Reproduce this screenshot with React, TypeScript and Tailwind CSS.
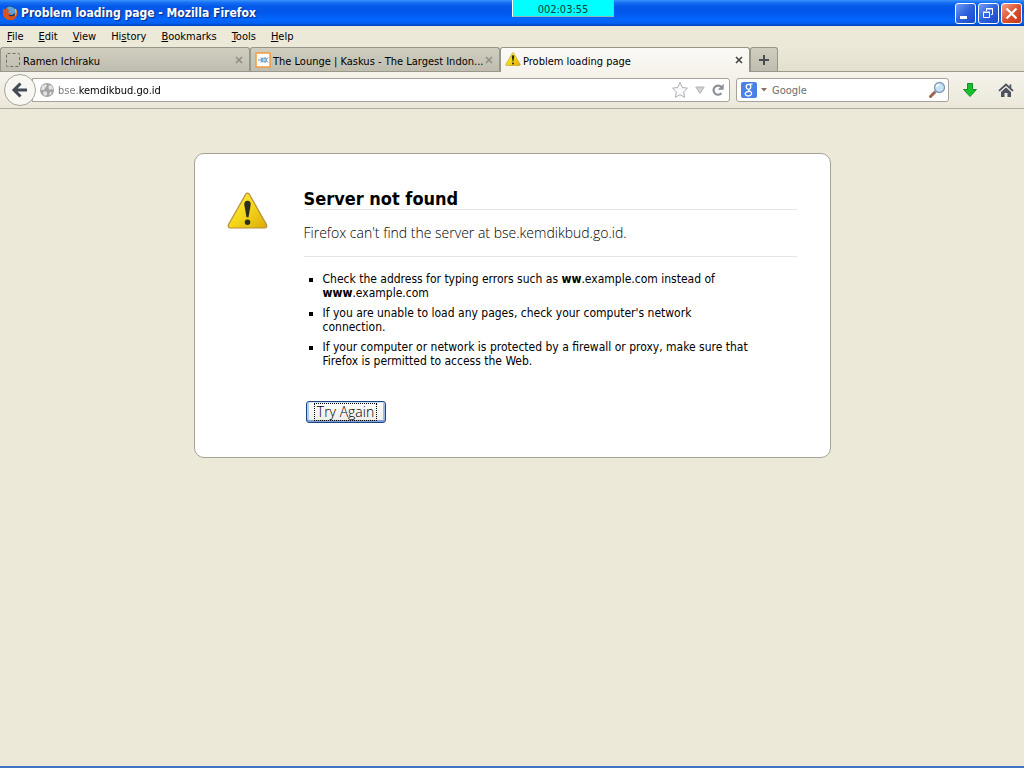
import { useState, type FormEvent } from "react";

const MENU_ITEMS = [
  { before: "", key: "F", after: "ile" },
  { before: "", key: "E", after: "dit" },
  { before: "", key: "V", after: "iew" },
  { before: "Hi", key: "s", after: "tory" },
  { before: "", key: "B", after: "ookmarks" },
  { before: "", key: "T", after: "ools" },
  { before: "", key: "H", after: "elp" },
];

const TABS = [
  { id: "ramen", title: "Ramen Ichiraku", icon: "blank" },
  { id: "kaskus", title: "The Lounge | Kaskus - The Largest Indon...", icon: "kaskus" },
  { id: "error", title: "Problem loading page", icon: "warning" },
] as const;

type TabIcon = (typeof TABS)[number]["icon"];

function FirefoxLogo() {
  return (
    <svg viewBox="0 0 16 16" className="h-4 w-4 shrink-0">
      <circle cx="8" cy="7.500" r="6.500" fill="#16346c" />
      <path d="M4 3C6 .6 11.500.8 13.300 4.600 13.800 8 12 10 9 10 6.500 10 5 8 5 6z" fill="#5aa5d8" />
      <path
        d="M1.600 3.200C.2 6 .4 10.500 3 13c3 3 8 2.800 10.600-.1C16 10 16 6.300 13.900 3.800c.5 2.200.3 4.400-1 5.900-1.800 2-5.100 2-6.600.2C8 10 9 9 9.500 8.300 7.500 8.500 6 8 5.800 6.500 6.500 6.300 7.600 6.200 8 5.400 7 5 5.600 4.600 5.400 3.200 4.300 3.300 3.400 3.700 2.800 4.400z"
        fill="#d9531c"
      />
      <path d="M13.900 3.800c1.400 3 .8 6-1 7.400.6-2.400.5-5-.2-7z" fill="#f8c33c" />
    </svg>
  );
}

function WarningIcon({ className, id }: { className: string; id: string }) {
  return (
    <svg viewBox="0 0 42 38" className={className}>
      <defs>
        <linearGradient id={id} x1="0" y1="0" x2="1" y2="1">
          <stop offset="0" stopColor="#fff04a" />
          <stop offset="0.500" stopColor="#f4d818" />
          <stop offset="1" stopColor="#dba90a" />
        </linearGradient>
      </defs>
      <path
        d="M19.200 2.200Q21 .2 22.800 2.200L40.600 33.500Q41.500 36.800 38.500 37H3.500Q.5 36.800 1.400 33.500z"
        fill={`url(#${id})`}
        stroke="#b58e3c"
        strokeWidth="1.200"
      />
      <path d="M21 9c2.600 0 3.600 1.800 3.200 4.500L22 26h-2L17.800 13.500C17.400 10.800 18.400 9 21 9z" fill="#2c2c20" />
      <circle cx="21" cy="31" r="2.800" fill="#2c2c20" />
    </svg>
  );
}

function TabFavicon({ icon }: { icon: TabIcon }) {
  if (icon === "warning") return <WarningIcon id="tab-warning" className="h-4 w-4 shrink-0 pb-0.5" />;
  if (icon === "kaskus") {
    return (
      <svg viewBox="0 0 16 16" className="h-4 w-4 shrink-0">
        <rect x="1" y="1" width="14" height="14" fill="#fff" stroke="#f49a42" strokeWidth="1.500" />
        <path d="M3 8h3M6 5.500l2 5M8 5.500 6 10.500M9 6v4M9 6h2v4H9M11 8l2-2.500M11 8l2 2.500" stroke="#5b94c4" fill="none" />
      </svg>
    );
  }
  return (
    <svg viewBox="0 0 16 16" className="h-4 w-4 shrink-0">
      <rect x="1.500" y="1.500" width="13" height="13" rx="1" fill="none" stroke="#6f6e66" strokeDasharray="3 2" />
    </svg>
  );
}

function TitleBar() {
  return (
    <header className="flex h-[26px] items-center bg-[linear-gradient(#3b93fb_0%,#1670f5_10%,#0458e8_25%,#0258ec_50%,#0366fe_75%,#0361f5_88%,#0142b8_100%)] px-0.5">
      <FirefoxLogo />
      <h1 className="ml-[3px] flex-1 whitespace-nowrap text-[12px] font-bold text-white [text-shadow:1px_1px_1px_#0a2a7a]">
        Problem loading page - Mozilla Firefox
      </h1>
      <div className="flex gap-0.5">
        <button
          type="button"
          aria-label="Minimize"
          className="flex h-[21px] w-[21px] items-center justify-center rounded-[3px] border border-white bg-linear-to-br from-[#6f9cf5] via-[#2c62dc] to-[#1a49c8]"
        >
          <svg viewBox="0 0 19 19" className="h-[19px] w-[19px]">
            <path d="M4 12h7v3H4z" fill="#fff" />
          </svg>
        </button>
        <button
          type="button"
          aria-label="Restore"
          className="flex h-[21px] w-[21px] items-center justify-center rounded-[3px] border border-white bg-linear-to-br from-[#6f9cf5] via-[#2c62dc] to-[#1a49c8]"
        >
          <svg viewBox="0 0 19 19" className="h-[19px] w-[19px]" fill="none" stroke="#fff">
            <path d="M7.500 7V4.500h6v6H12M7 5h7M4.500 8.500h6v5h-6zM4 8h7" />
          </svg>
        </button>
        <button
          type="button"
          aria-label="Close"
          className="flex h-[21px] w-[21px] items-center justify-center rounded-[3px] border border-white bg-linear-to-br from-[#f0a088] via-[#dc5030] to-[#c03a18]"
        >
          <svg viewBox="0 0 19 19" className="h-[19px] w-[19px]">
            <path d="M4.500 4.500l10 10M14.500 4.500l-10 10" stroke="#fff" strokeWidth="2.200" />
          </svg>
        </button>
      </div>
    </header>
  );
}

function MenuBar() {
  return (
    <nav className="flex h-[21px] gap-[15px] pl-[7px] text-[11px] leading-5">
      {MENU_ITEMS.map((item) => (
        <button key={item.key + item.after} type="button" className="whitespace-nowrap">
          {item.before}
          <u>{item.key}</u>
          {item.after}
        </button>
      ))}
    </nav>
  );
}

function TabStrip() {
  const [active, setActive] = useState<string>("error");

  return (
    <div className="flex h-[25px] border-b border-[#9a9888] bg-linear-to-b from-[#ece9d8] to-[#e2dfcf]">
      {TABS.map((tab) => {
        const selected = tab.id === active;
        return (
          <div
            key={tab.id}
            className={`flex w-[250px] min-w-0 items-center rounded-t-[3px] border border-b-0 border-[#97958a] pl-1 pr-1.5 ${
              selected ? "-mb-px bg-linear-to-b from-[#fbfaf6] to-[#f5f3eb]" : "bg-linear-to-b from-[#d0cebf] to-[#bfbdaf]"
            }`}
          >
            <button
              type="button"
              onClick={() => setActive(tab.id)}
              className="flex min-w-0 flex-1 items-center gap-0.5 text-left text-[11px]"
            >
              <TabFavicon icon={tab.icon} />
              <span className="truncate pt-1 leading-4">{tab.title}</span>
            </button>
            <button type="button" aria-label={`Close ${tab.title}`}>
              <svg viewBox="0 0 8 8" className={`h-2 w-2 ${selected ? "text-[#44443f]" : "text-[#8f8d83]"}`}>
                <path d="M1 1l6 6M7 1L1 7" stroke="currentColor" strokeWidth="1.600" />
              </svg>
            </button>
          </div>
        );
      })}
      <button
        type="button"
        aria-label="Open a new tab"
        className="flex w-7 items-center justify-center rounded-t-[3px] border border-b-0 border-[#97958a] bg-linear-to-b from-[#d0cebf] to-[#bfbdaf]"
      >
        <svg viewBox="0 0 12 12" className="h-3 w-3">
          <path d="M6 1v10M1 6h10" stroke="#4a4d52" strokeWidth="2" />
        </svg>
      </button>
    </div>
  );
}

function NavBar() {
  const [url, setUrl] = useState("bse.kemdikbud.go.id");
  const [query, setQuery] = useState("");

  return (
    <div className="flex h-[37px] items-center border-b border-[#aeac9e] bg-linear-to-b from-[#f5f3eb] to-[#ebe8da] pl-1 pr-[9px]">
      <button
        type="button"
        aria-label="Back"
        className="z-10 flex h-8 w-8 shrink-0 items-center justify-center rounded-full border border-[#a8a69a] bg-[#f8f7f2]"
      >
        <svg viewBox="0 0 18 18" className="h-[18px] w-[18px]">
          <path d="M9.500 2.500L3 9l6.500 6.500M3.500 9H16" fill="none" stroke="#434b57" strokeWidth="3" />
        </svg>
      </button>
      <div className="-ml-1 flex h-6 min-w-0 flex-1 items-center rounded-r-[3px] border border-[#a5a397] bg-white pl-1.5 pr-1">
        <svg viewBox="0 0 16 16" className="h-4 w-4 shrink-0">
          <circle cx="8" cy="8" r="7" fill="#a3a3a3" />
          <path d="M3 4l4-2 1 2-2 2-1 2-3 0zM10 3l3 1 1.500 4-2-1-2 1-1-2zM5 9l3 1 0 3-2 1-2-2zM11 10l2 0-1.500 3-1.500 0z" fill="#e3e3e3" />
        </svg>
        {/* subdomain is dimmed, the rest of the host stays black */}
        <input
          aria-label="Address"
          value={url}
          onChange={(e) => setUrl(e.target.value)}
          className="ml-[3px] min-w-0 flex-1 bg-[linear-gradient(90deg,#777_21px,#000_21px)] bg-clip-text pt-0.5 text-[11px] text-transparent caret-black outline-none"
        />
        <div className="flex items-center gap-1">
          <button type="button" aria-label="Bookmark this page">
            <svg viewBox="0 0 18 18" className="h-[18px] w-[18px]">
              <path
                d="M9 1.500l2.300 5 5.200.7-3.800 3.700.9 5.400L9 13.700l-4.600 2.600.9-5.400L1.500 7.200l5.200-.7z"
                fill="#fbfbfb"
                stroke="#a9adb5"
              />
            </svg>
          </button>
          <button type="button" aria-label="Show history" className="px-0.5">
            <svg viewBox="0 0 10 8" className="h-2 w-2.5">
              <path d="M.8 1h8.400L5 7.500z" fill="#d2d3d7" stroke="#afb2b8" />
            </svg>
          </button>
          <button type="button" aria-label="Reload">
            <svg viewBox="0 0 14 14" className="h-3.5 w-3.5">
              <path d="M10.500 10.300A4.600 4.600 0 1 1 10.300 3.800" fill="none" stroke="#8a8f98" strokeWidth="2.200" />
              <path d="M12.700.8v6H6.700z" fill="#8a8f98" />
            </svg>
          </button>
        </div>
      </div>
      <div className="ml-1.5 flex h-6 w-[213px] items-center rounded-[3px] border border-[#a5a397] bg-white pl-1 pr-0.5">
        <button type="button" aria-label="Choose search engine" className="flex items-center gap-1">
          <span className="flex h-4 w-4 items-center justify-center rounded-[2px] bg-[#4a80e8]">
            <svg viewBox="0 0 16 16" className="h-4 w-4" fill="none" stroke="#fff" strokeWidth="1.300">
              <ellipse cx="7.500" cy="4.800" rx="2.300" ry="2.500" />
              <path d="M8.500 2.200h3M8 7.300c-1.200 1 .3 1.500 1.500 2.200 2.200 1.500 1 4.500-2 4.500-2.900 0-4-2-2.800-3.400C5.500 9.700 7 9.500 8.500 9.300" />
            </svg>
          </span>
          <svg viewBox="0 0 6 4" className="h-1 w-1.5">
            <path d="M0 0h6L3 3.500z" fill="#8b6c66" />
          </svg>
        </button>
        <input
          aria-label="Search"
          placeholder="Google"
          value={query}
          onChange={(e) => setQuery(e.target.value)}
          className="ml-[5px] min-w-0 flex-1 pt-0.5 text-[11px] outline-none placeholder:text-[#6d6d6d]"
        />
        <button type="button" aria-label="Search the web">
          <svg viewBox="0 0 18 18" className="h-[18px] w-[18px]">
            <path d="M7 11L2.500 15.500" stroke="#9a6548" strokeWidth="3" strokeLinecap="round" />
            <path d="M8.500 9.500L6.500 11.500" stroke="#8a8f99" strokeWidth="2" />
            <circle cx="11.500" cy="6.500" r="5" fill="#c4e3f7" stroke="#8399b5" strokeWidth="1.300" />
            <path d="M8.500 6a3 3 0 0 1 3-2.500" fill="none" stroke="#fff" strokeWidth="1.500" />
          </svg>
        </button>
      </div>
      <button type="button" aria-label="Downloads" className="ml-3.5">
        <svg viewBox="0 0 14 16" className="h-4 w-3.5">
          <path d="M4.500 1.500h5v6h4L7 14.500.5 7.500h4z" fill="#17c02c" stroke="#11901f" />
        </svg>
      </button>
      <button type="button" aria-label="Home" className="ml-5">
        <svg viewBox="0 0 18 16" className="h-4 w-[18px]">
          <path d="M2 8.800L9 2.500l7 6.300" fill="none" stroke="#4c535e" strokeWidth="1.800" />
          <path d="M12.500 2.500h1.800v4l-1.800-1.500zM9 5.500l5 4.500V15H10.500v-4h-3v4H4V10z" fill="#4c535e" />
        </svg>
      </button>
    </div>
  );
}

function ErrorPage() {
  const [retrying, setRetrying] = useState(false);

  function onSubmit(e: FormEvent) {
    e.preventDefault();
    setRetrying(true);
  }

  return (
    <main className="flex-1 px-4 pt-11">
      <section className="mx-auto flex max-w-[637px] gap-9 rounded-[10px] border border-[#a5a397] bg-white pl-8 pr-[33px] pb-[34px] pt-8">
        <WarningIcon id="page-warning" className="mt-1.5 h-[37px] w-[41px] shrink-0" />
        <div className="min-w-0 flex-1">
          <h2 className="border-b border-[#e6e6e6] pt-0.5 text-[18px] font-bold leading-[21px]">Server not found</h2>
          <p className="border-b border-[#e6e6e6] py-[13px] font-['Open_Sans',sans-serif] text-[14px] font-light leading-5">
            Firefox can't find the server at bse.kemdikbud.go.id.
          </p>
          <ul className="mt-[15px] flex list-[square] flex-col gap-1.5 pl-[19px] pr-10 text-[12px] leading-[14px]">
            <li>
              Check the address for typing errors such as <b>ww</b>.example.com instead of <b>www</b>.example.com
            </li>
            <li>If you are unable to load any pages, check your computer's network connection.</li>
            <li>
              If your computer or network is protected by a firewall or proxy, make sure that Firefox is permitted to
              access the Web.
            </li>
          </ul>
          <form onSubmit={onSubmit} className="mt-[33px] pl-0.5">
            <button
              type="submit"
              disabled={retrying}
              className="flex h-[22px] w-20 items-center justify-center rounded-[3px] border border-[#1c4580] bg-linear-to-b from-[#fdfdfb] to-[#eeede6] font-['Open_Sans',sans-serif] text-[14px] font-light shadow-[inset_0_-2px_0_#7f9fdc,inset_0_1px_0_#cfe0fb,inset_2px_0_0_#b5ccf3,inset_-2px_0_0_#9db9ea]"
            >
              <span className="whitespace-nowrap border border-dotted border-black px-0.5 leading-4">Try Again</span>
            </button>
          </form>
        </div>
      </section>
    </main>
  );
}

export default function App() {
  return (
    <div className="relative flex min-h-screen flex-col border-b-2 border-[#3f74c4] bg-[#ece9d8] font-['DejaVu_Sans_Condensed','DejaVu_Sans',sans-serif] text-black">
      <TitleBar />
      <div className="absolute left-1/2 top-0 h-[17px] w-[102px] border border-t-0 border-[#8fb8b8] border-l-white bg-[#00ffff] text-center text-[11px] leading-5 text-[#0a3c3c]">
        002:03:55
      </div>
      <MenuBar />
      <TabStrip />
      <NavBar />
      <ErrorPage />
    </div>
  );
}
